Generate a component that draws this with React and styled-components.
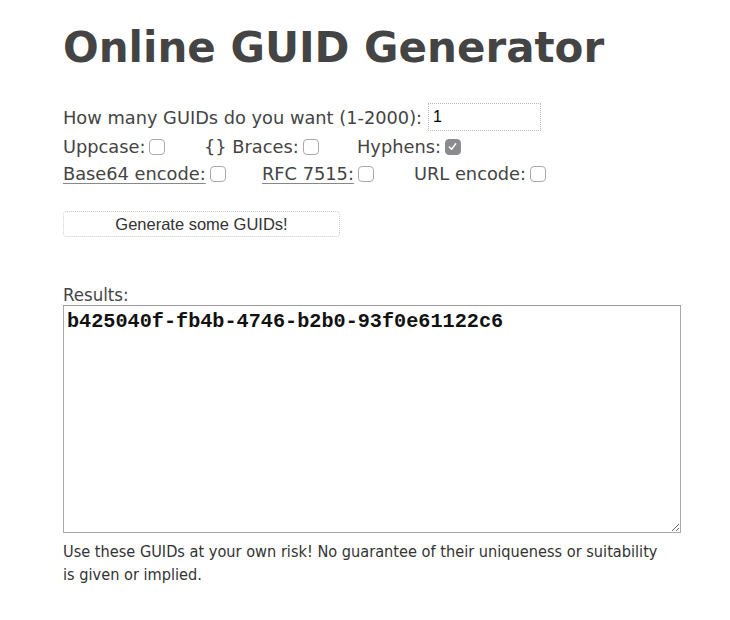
import React from "react";
import styled, { createGlobalStyle } from "styled-components";

const Global = createGlobalStyle`
  html, body { margin: 0; padding: 0; background: #fff; }
  body { font-family: "DejaVu Sans", Verdana, sans-serif; color: #444; }
`;

const Page = styled.div`
  padding: 21px 0 0 63px;
  width: 640px;
`;

const Title = styled.h1`
  margin: 0 0 26px 0;
  font-family: "DejaVu Sans", Verdana, sans-serif;
  font-weight: bold;
  font-size: 42px;
  line-height: 54px;
  color: #444;
`;

const Form = styled.div`
  display: flex;
  flex-direction: column;
  font-size: 17.8px;
`;

const Row = styled.div`
  display: flex;
  align-items: center;
  height: ${(p) => p.h || 27}px;
`;

const Field = styled.label`
  display: inline-flex;
  align-items: center;
  flex: none;
  width: ${(p) => (p.w ? `${p.w}px` : "auto")};
`;

const LabelText = styled.span`
  white-space: nowrap;
  text-decoration: ${(p) => (p.u ? "underline" : "none")};
  text-decoration-color: #888;
  text-decoration-thickness: 1px;
  text-underline-offset: 3px;
  margin-right: 4px;
`;

const NumInput = styled.input`
  box-sizing: border-box;
  width: 113px;
  height: 28px;
  margin-left: 6px;
  padding: 0 4px;
  border: 1px dotted #bbb;
  font-family: "Liberation Sans", Arial, sans-serif;
  font-size: 16px;
  color: #000;
  outline: none;
`;

const Box = styled.span`
  display: inline-flex;
  align-items: center;
  justify-content: center;
  box-sizing: border-box;
  width: 16px;
  height: 16px;
  border-radius: 4px;
  border: 1px solid ${(p) => (p.on ? "#8b8b8f" : "#aaa")};
  background: ${(p) => (p.on ? "#8b8b8f" : "#fff")};
`;

const Check = ({ on }) => (
  <Box on={on ? 1 : 0}>
    {on && (
      <svg width="11" height="11" viewBox="0 0 12 12">
        <path d="M2.5 6.5 L5 9 L9.5 3" stroke="#fff" strokeWidth="1.6" fill="none" strokeLinecap="round" strokeLinejoin="round" />
      </svg>
    )}
  </Box>
);

const Button = styled.button`
  display: block;
  margin-top: 24px;
  width: 277px;
  height: 26px;
  border: 1px dotted #ccc;
  border-radius: 4px;
  background: #fff;
  font-family: "Liberation Sans", Arial, sans-serif;
  font-size: 16.5px;
  color: #333;
  padding: 0;
`;

const ResultsLabel = styled.div`
  margin-top: 47px;
  font-family: "DejaVu Sans Condensed", Tahoma, sans-serif;
  font-size: 18.5px;
  line-height: 21px;
`;

const Area = styled.textarea`
  display: block;
  box-sizing: border-box;
  width: 618px;
  height: 228px;
  margin: 0;
  padding: 4px 3px;
  border: 1px solid #aaa;
  border-top-color: #999;
  font-family: "Liberation Mono", "Courier New", monospace;
  font-weight: bold;
  font-size: 20.2px;
  line-height: 24px;
  color: #111;
  resize: both;
  outline: none;
`;

const Note = styled.p`
  margin: 7px 0 0 0;
  width: 595px;
  font-family: "DejaVu Sans Condensed", Tahoma, sans-serif;
  font-size: 16.2px;
  line-height: 23px;
  color: #333;
`;

export default function App() {
  return (
    <>
      <Global />
      <Page>
        <Title>Online GUID Generator</Title>
        <Form>
          <Row h={32}>
            <span>How many GUIDs do you want (1-2000):</span>
            <NumInput defaultValue="1" />
          </Row>
          <Row>
            <Field w={141}><LabelText>Uppcase:</LabelText><Check /></Field>
            <Field w={153}><LabelText>{"{}"} Braces:</LabelText><Check /></Field>
            <Field><LabelText>Hyphens:</LabelText><Check on /></Field>
          </Row>
          <Row>
            <Field w={199}><LabelText u>Base64 encode:</LabelText><Check /></Field>
            <Field w={152}><LabelText u>RFC 7515:</LabelText><Check /></Field>
            <Field><LabelText>URL encode:</LabelText><Check /></Field>
          </Row>
        </Form>
        <Button>Generate some GUIDs!</Button>
        <ResultsLabel>Results:</ResultsLabel>
        <Area defaultValue="b425040f-fb4b-4746-b2b0-93f0e61122c6" />
        <Note>
          Use these GUIDs at your own risk! No guarantee of their uniqueness or suitability is given or implied.
        </Note>
      </Page>
    </>
  );
}
